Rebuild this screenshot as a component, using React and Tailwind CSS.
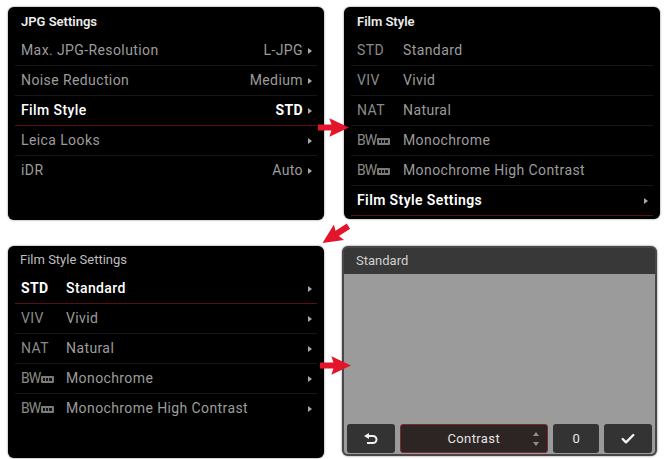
import { Check } from 'lucide-react';

const font = { fontFamily: 'Roboto, "Liberation Sans", sans-serif' };

// tiny right-pointing marker used at the end of menu rows
function Chevron() {
  return (
    <svg width="4" height="6" viewBox="0 0 4 6" className="shrink-0">
      <path d="M0 0 L4 3 L0 6 Z" fill="#a8a8a8" />
    </svg>
  );
}

// "BW" badge with the small boxed suffix
function BwBadge({ dim }) {
  return (
    <span className="flex items-center gap-[1px]">
      <span className={`tracking-[-1px] ${dim ? 'text-[#8a8a8a]' : 'text-white'}`}>BW</span>
      <svg width="13" height="7" viewBox="0 0 13 7" className="mt-[1px]">
        <rect x="0" y="0" width="13" height="7" rx="1" fill={dim ? '#7a7a7a' : '#dddddd'} />
        <rect x="2" y="2" width="2" height="3" fill="#111" />
        <rect x="5" y="2" width="2" height="3" fill="#111" />
        <rect x="8" y="2" width="3" height="3" fill="#111" />
      </svg>
    </span>
  );
}

function Arrow({ className }) {
  return (
    <svg width="31" height="19" viewBox="0 0 30 18" className={`absolute ${className}`}>
      <path d="M0 6 L13 6 L11 0 L30 9 L11 18 L13 12 L0 12 Z" fill="#e3152b" />
    </svg>
  );
}

function Row({ selected, last, children }) {
  return (
    <div
      className={`h-[30px] flex items-center pl-[6px] pr-[5px] border-b tracking-[0.4px] ${
        selected ? 'border-[#5c0d18]' : last ? 'border-transparent' : 'border-[#161616]'
      }`}
    >
      {children}
    </div>
  );
}

function JpgSettings() {
  const rows = [
    ['Max. JPG-Resolution', 'L-JPG'],
    ['Noise Reduction', 'Medium'],
    ['Film Style', 'STD', true],
    ['Leica Looks', ''],
    ['iDR', 'Auto'],
  ];
  return (
    <div className="bg-black rounded-[6px] h-[213px] px-[7px] shadow-[0_0_2px_rgba(0,0,0,0.6)]">
      <div className="h-[29px] flex items-center pl-[6px] text-[13px] font-semibold text-[#ececec]">
        JPG Settings
      </div>
      {rows.map(([label, value, sel], i) => (
        <Row key={label} selected={sel} last={i === rows.length - 1}>
          <span className={`flex-1 text-[14px] ${sel ? 'text-white font-medium' : 'text-[#9c9c9c]'}`}>{label}</span>
          <span className={`mr-[5px] text-[14px] ${sel ? 'text-white font-bold' : 'text-[#9c9c9c]'}`}>{value}</span>
          <Chevron />
        </Row>
      ))}
    </div>
  );
}

function FilmStyle() {
  const rows = [
    ['STD', 'Standard'],
    ['VIV', 'Vivid'],
    ['NAT', 'Natural'],
    ['BW1', 'Monochrome'],
    ['BW2', 'Monochrome High Contrast'],
  ];
  return (
    <div className="bg-black rounded-[6px] h-[212px] px-[7px] shadow-[0_0_2px_rgba(0,0,0,0.6)]">
      <div className="h-[29px] flex items-center pl-[6px] text-[13px] font-semibold text-[#ececec]">Film Style</div>
      {rows.map(([abbr, name]) => (
        <Row key={abbr}>
          <span className="w-[46px] text-[14px] text-[#8a8a8a]">
            {abbr.startsWith('BW') ? <BwBadge dim /> : abbr}
          </span>
          <span className="flex-1 text-[14px] text-[#9c9c9c]">{name}</span>
        </Row>
      ))}
      <Row selected>
        <span className="flex-1 text-[14px] font-semibold text-white">Film Style Settings</span>
        <Chevron />
      </Row>
    </div>
  );
}

function FilmStyleSettings() {
  const rows = [
    ['STD', 'Standard', true],
    ['VIV', 'Vivid'],
    ['NAT', 'Natural'],
    ['BW1', 'Monochrome'],
    ['BW2', 'Monochrome High Contrast'],
  ];
  return (
    <div className="bg-black rounded-[6px] h-[212px] px-[7px] shadow-[0_0_2px_rgba(0,0,0,0.6)]">
      <div className="h-[28px] flex items-center pl-[5px] text-[13px] text-[#bdbdbd]">Film Style Settings</div>
      {rows.map(([abbr, name, sel], i) => (
        <Row key={abbr} selected={sel} last={i === rows.length - 1}>
          <span className={`w-[45px] text-[14px] ${sel ? 'text-white font-bold' : 'text-[#8a8a8a]'}`}>
            {abbr.startsWith('BW') ? <BwBadge dim /> : abbr}
          </span>
          <span className={`flex-1 text-[14px] ${sel ? 'text-white font-medium' : 'text-[#9c9c9c]'}`}>{name}</span>
          <Chevron />
        </Row>
      ))}
    </div>
  );
}

function StandardEditor() {
  return (
    <div className="ml-[-2px] w-[315px] h-[210px] rounded-[6px] bg-[#474747] p-[2px] flex flex-col shadow-[0_0_2px_rgba(0,0,0,0.6)]">
      <div className="h-[26px] shrink-0 rounded-t-[4px] bg-[#383838] flex items-center pl-[12px] text-[13px] text-[#d0d0d0]">
        Standard
      </div>
      <div className="flex-1 bg-[#9b9b9b] rounded-b-[4px] flex flex-col justify-end px-[3px] pb-[1px]">
        <div className="flex gap-[5px] h-[29px]">
          <div className="w-[48px] rounded-[3px] bg-[#333333] flex items-center justify-center">
            <svg width="14" height="12" viewBox="0 0 14 12">
              <path d="M4 3 H9 A3.5 3.5 0 0 1 9 10 H3" fill="none" stroke="#f2f2f2" strokeWidth="2" />
              <path d="M0 3 L5 0 L5 6 Z" fill="#f2f2f2" />
            </svg>
          </div>
          <div className="w-[150px] rounded-[3px] bg-[#2d2424] border border-[#7b2a30] flex items-center relative">
            <span className="flex-1 text-center text-[13px] tracking-[0.4px] text-[#e4e4e4]">Contrast</span>
            <svg width="6" height="16" viewBox="0 0 6 16" className="absolute right-[8px]">
              <path d="M0 5 L3 1 L6 5 Z" fill="#8f8f8f" />
              <path d="M0 11 L3 15 L6 11 Z" fill="#8f8f8f" />
            </svg>
          </div>
          <div className="w-[47px] rounded-[3px] bg-[#333333] flex items-center justify-center text-[13px] text-[#e8e8e8]">
            0
          </div>
          <div className="w-[48px] rounded-[3px] bg-[#333333] flex items-center justify-center">
            <Check size={16} strokeWidth={3.5} color="#f5f5f5" />
          </div>
        </div>
      </div>
    </div>
  );
}

export default function App() {
  return (
    <div className="relative w-[665px] h-[459px] bg-white overflow-hidden" style={font}>
      <div className="grid grid-cols-[316px_316px] gap-x-[20px] gap-y-[26px] pt-[7px] pl-[8px]">
        <JpgSettings />
        <FilmStyle />
        <FilmStyleSettings />
        <StandardEditor />
      </div>

      {/* red flow arrows between the screens */}
      <Arrow className="left-[318px] top-[118px]" />
      <Arrow className="left-[320px] top-[225px] rotate-[147deg]" />
      <Arrow className="left-[320px] top-[356px]" />
    </div>
  );
}
